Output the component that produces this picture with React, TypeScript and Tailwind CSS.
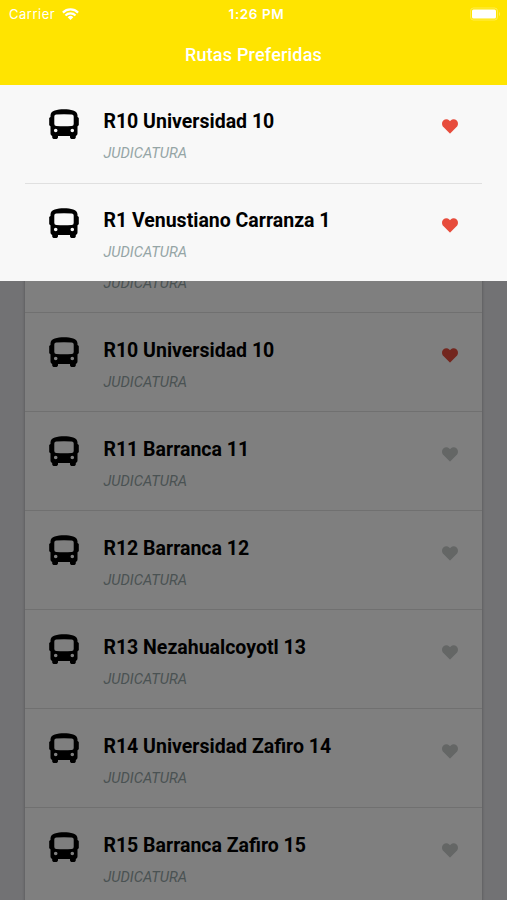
interface IRoute {
  name: string;
  place: string;
  favorite: boolean;
}

const favorites: IRoute[] = [
  { name: 'R10 Universidad 10', place: 'JUDICATURA', favorite: true },
  { name: 'R1 Venustiano Carranza 1', place: 'JUDICATURA', favorite: true },
];

const routes: IRoute[] = [
  { name: 'R1 Venustiano Carranza 1', place: 'JUDICATURA', favorite: true },
  { name: 'R10 Universidad 10', place: 'JUDICATURA', favorite: true },
  { name: 'R11 Barranca 11', place: 'JUDICATURA', favorite: false },
  { name: 'R12 Barranca 12', place: 'JUDICATURA', favorite: false },
  { name: 'R13 Nezahualcoyotl 13', place: 'JUDICATURA', favorite: false },
  { name: 'R14 Universidad Zafiro 14', place: 'JUDICATURA', favorite: false },
  { name: 'R15 Barranca Zafiro 15', place: 'JUDICATURA', favorite: false },
];

const BusIcon = () => (
  <svg viewBox="0 0 30 30" className="size-[30px] shrink-0 text-black" fill="currentColor">
    {/* Mirrors */}
    <rect x="0.2" y="8" width="4" height="9.2" rx="1.6" />
    <rect x="25.8" y="8" width="4" height="9.2" rx="1.6" />
    {/* Body with window and headlights cut out */}
    <path
      fillRule="evenodd"
      d="M1.500 6.200C1.500 1.600 8.400.2 15 .2S28.500 1.600 28.500 6.200V24.200c0 1.300-.7 2.400-1.700 2.700v1c0 1.300-.9 2.100-2.300 2.100h-1.200c-1.400 0-2.300-.8-2.300-2.100v-1H9v1c0 1.300-.9 2.100-2.300 2.100H5.500c-1.400 0-2.300-.8-2.300-2.100v-1C2.200 26.600 1.500 25.500 1.500 24.200zM7.300 5.600a2 2 0 0 0-2 2v7.400a2 2 0 0 0 2 2q7.700.7 15.400 0a2 2 0 0 0 2-2V7.600a2 2 0 0 0-2-2q-7.700-.5-15.400 0zM6.700 19.700a1.800 1.800 0 1 0 0 3.600a1.800 1.800 0 1 0 0-3.600zM23.300 19.700a1.800 1.800 0 1 0 0 3.600a1.800 1.800 0 1 0 0-3.600z"
    />
  </svg>
);

const HeartIcon = ({ active }: { active: boolean }) => (
  <svg
    viewBox="0 0 16 15"
    className={active ? 'h-[15px] w-4 shrink-0 text-[#e74c3c]' : 'h-[15px] w-4 shrink-0 text-[#c8cccb]'}
    fill="currentColor"
  >
    <path d="M7.600 14.300L1.400 8.100C-.4 6.200-.4 3.200 1.300 1.500C3-.1 5.800-.1 7.300 1.500L8 2.200L8.700 1.500C10.200-.1 13-.1 14.700 1.500C16.400 3.200 16.400 6.200 14.600 8.100L8.400 14.300Q8 14.700 7.600 14.300z" />
  </svg>
);

const StatusBar = () => (
  <div className="grid h-7 grid-cols-3 items-center pr-1.5 pl-[9px] font-['Inter',sans-serif] text-[13px] text-white">
    <div className="flex items-center gap-[7px]">
      <span className="pt-px tracking-[0.5px]">Carrier</span>
      <svg viewBox="0 0 17 12" className="h-3 w-[17px]" fill="none" stroke="currentColor" strokeWidth="2.2">
        <path d="M0.9 4.6a10.8 10.8 0 0 1 15.2 0" />
        <path d="M3.500 7.400a7 7 0 0 1 10 0" />
        <path d="M8.500 12L5.700 9.200a4 4 0 0 1 5.600 0z" fill="currentColor" stroke="none" />
      </svg>
    </div>
    <span className="pt-px pl-[3px] text-center text-[13.5px] font-semibold tracking-[0.6px]">1:26 PM</span>
    <svg viewBox="0 0 31 14" className="h-3.5 w-[31px] justify-self-end">
      <rect x="0.5" y="1" width="27" height="12" rx="3" fill="none" stroke="#fff" strokeOpacity="0.3" />
      <rect x="2" y="2.500" width="24" height="9" rx="1.5" fill="#fff" />
      <path d="M29 5v4c1.400-.6 1.400-3.400 0-4z" fill="#fff" fillOpacity="0.35" />
    </svg>
  </div>
);

const RouteRow = ({ route }: { route: IRoute }) => (
  <li className="flex h-[99px] shrink-0 items-start border-b border-[#e0e0e0] pt-6 pr-6 pl-[24.4px] last:border-transparent">
    <BusIcon />
    <div className="ml-6 min-w-0 flex-1">
      <h2 className="mt-[1.2px] text-[19.5px] leading-6 font-bold text-black">{route.name}</h2>
      <p className="mt-[11px] text-[14.7px] leading-4 text-[#95a5a6] italic">{route.place}</p>
    </div>
    <div className="mt-[10.2px]">
      <HeartIcon active={route.favorite} />
    </div>
  </li>
);

const App = () => {
  return (
    <div className="relative h-[900px] w-[507px] overflow-hidden bg-[#e4e4e9] font-['Roboto',sans-serif]">
      {/* Route list */}
      <main className="h-full overflow-hidden px-[25px] pt-[214.4px]">
        <ul className="bg-white shadow-[0_0_3px_rgba(0,0,0,0.3)]">
          {routes.map((route) => (
            <RouteRow key={route.name} route={route} />
          ))}
        </ul>
      </main>

      {/* Favorites modal */}
      <div className="absolute inset-0 bg-black/50">
        <header className="h-[85px] bg-[#ffe400]">
          <StatusBar />
          <h1 className="mt-[15px] text-center text-[18px] leading-6 font-medium tracking-[0.2px] text-white">
            Rutas Preferidas
          </h1>
        </header>
        <ul className="h-[196px] overflow-hidden bg-[#f8f8f8] px-[25px]">
          {favorites.map((route) => (
            <RouteRow key={route.name} route={route} />
          ))}
        </ul>
      </div>
    </div>
  );
};

export default App;
